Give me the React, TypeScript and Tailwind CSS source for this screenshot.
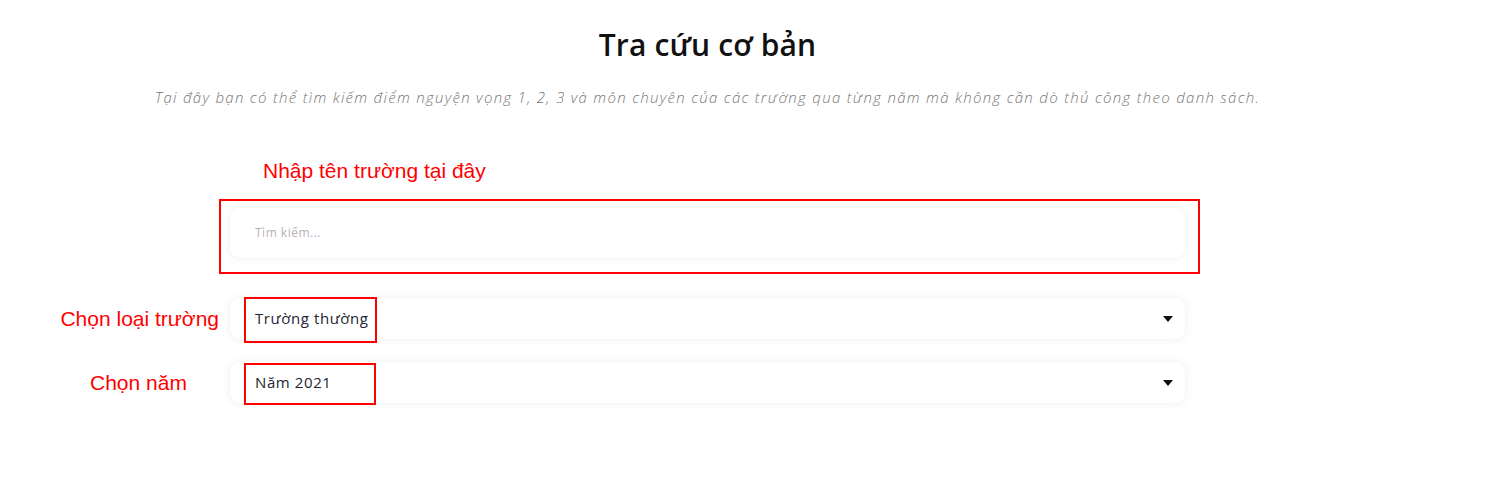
import React from 'react';

const annotationClass = "absolute text-[21px] leading-[24px] text-[#ff0000] whitespace-nowrap font-['Liberation_Sans',Arial,sans-serif]";
const fieldClass = "flex items-center w-full bg-white rounded-[10px] shadow-[0_0_10px_rgba(0,0,0,0.07)]";

const Caret: React.FC = () => (
  <svg width="10" height="6" viewBox="0 0 10 6" className="shrink-0">
    <path d="M0 0 L10 0 L5 6 Z" fill="#111" />
  </svg>
);

export default function App() {
  return (
    <div className="min-h-[488px] bg-white font-['Open_Sans','Noto_Sans',sans-serif]">
      <div className="w-[1415px] pt-[27px] flex flex-col items-center">
        <h1 className="text-[30px] leading-[36px] font-semibold text-[#111] tracking-[0.15px]">Tra cứu cơ bản</h1>
        <p className="mt-[24px] text-[15px] leading-[20px] italic font-light text-[#777] tracking-[1.3px]">
          Tại đây bạn có thể tìm kiếm điểm nguyện vọng 1, 2, 3 và môn chuyên của các trường qua từng năm mà không cần dò thủ công theo danh sách.
        </p>

        <div className="relative w-[955px] mt-[101px]">
          {/* search input */}
          <div className={`${fieldClass} h-[50px] px-[25px]`}>
            <input
              type="text"
              placeholder="Tìm kiếm..."
              className="w-full bg-transparent outline-none text-[12px] tracking-[0.5px] text-[#333] placeholder:text-[#b8aeb8]"
            />
          </div>

          {/* school type */}
          <div className={`${fieldClass} h-[41px] mt-[40px] pl-[25px] pr-[12px] justify-between`}>
            <span className="text-[15px] text-[#1d2430] tracking-[0.6px]">Trường thường</span>
            <Caret />
          </div>

          {/* year */}
          <div className={`${fieldClass} h-[41px] mt-[23px] pl-[25px] pr-[12px] justify-between`}>
            <span className="text-[15px] text-[#1d2430] tracking-[0.6px]">Năm 2021</span>
            <Caret />
          </div>

          {/* annotations */}
          <span className={`${annotationClass} left-[33px] top-[-49px]`}>Nhập tên trường tại đây</span>
          <div className="absolute left-[-11px] top-[-9px] w-[981px] h-[75px] border-2 border-[#ff0000]" />
          <div className="absolute left-[14px] top-[89px] w-[133px] h-[46px] border-2 border-[#ff0000]" />
          <span className={`${annotationClass} right-[966px] top-[99px]`}>Chọn loại trường</span>
          <div className="absolute left-[14px] top-[155px] w-[132px] h-[42px] border-2 border-[#ff0000]" />
          <span className={`${annotationClass} left-[-140px] top-[163px]`}>Chọn năm</span>
        </div>
      </div>
    </div>
  );
}
